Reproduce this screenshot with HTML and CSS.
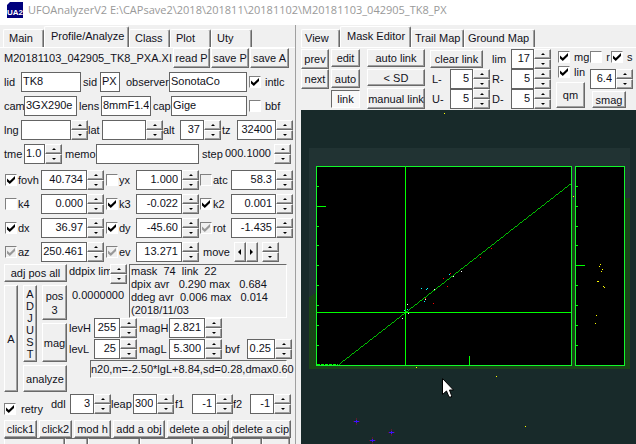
FILE: index.html
```html
<!DOCTYPE html>
<html lang="en">
<head>
  <meta charset="UTF-8">
  <meta name="viewport" content="width=device-width, initial-scale=1.0">
  <title>UFOAnalyzerV2</title>
  <link rel="stylesheet" href="styles.css">
</head>
<body>
  <header class="titlebar">
    <svg class="logo" width="16" height="16" viewBox="0 0 16 16">
      <path d="M0 3L3 0H16V16H0Z" fill="#00007c"/>
      <text x="8" y="13" text-anchor="middle" fill="#fff">UA2</text>
    </svg>
    <span>UFOAnalyzerV2 E:\CAPsave2\2018\201811\20181102\M20181103_042905_TK8_PX</span>
  </header>

  <main class="window">
    <section class="profile">
      <nav class="tabs">
        <button>Main</button>
        <button class="active">Profile/Analyze</button>
        <button>Class</button>
        <button>Plot</button>
        <button>Uty</button>
      </nav>
      <div class="panel">
        <div class="row file">
          <span class="name">M20181103_042905_TK8_PXA.XI</span>
          <button>read P</button>
          <button>save P</button>
          <button>save A</button>
        </div>

        <div class="row lid">
          <label for="lid">lid</label><input id="lid" value="TK8">
          <label for="sid">sid</label><input id="sid" value="PX">
          <label for="observer">observer</label><input id="observer" value="SonotaCo">
          <label class="check"><input type="checkbox" checked>intlc</label>
        </div>
        <div class="row cam">
          <label for="cam">cam</label><input id="cam" value="3GX290e">
          <label for="lens">lens</label><input id="lens" value="8mmF1.4">
          <label for="cap">cap</label><input id="cap" value="Gige">
          <label class="check"><input type="checkbox">bbf</label>
        </div>
        <div class="row lng">
          <label for="lng">lng</label><input id="lng"><span class="spin"></span>
          <label for="lat">lat</label><input id="lat"><span class="spin"></span>
          <label for="alt">alt</label><input id="alt" class="num" value="37"><span class="spin"></span>
          <label for="tz">tz</label><input id="tz" class="num" value="32400"><span class="spin"></span>
        </div>
        <div class="row tme">
          <label for="tme">tme</label><input id="tme" value="1.0"><span class="spin"></span>
          <label for="memo">memo</label><input id="memo">
          <label for="step">step</label><input id="step" class="flat" value="000.1000"><span class="spin"></span>
        </div>

        <div class="row coef first">
          <label class="check"><input type="checkbox" checked>fovh</label><input class="num" aria-label="fovh" value="40.734"><span class="spin"></span>
          <label class="check"><input type="checkbox">yx</label><input class="num" aria-label="yx" value="1.000"><span class="spin"></span>
          <label class="check"><input type="checkbox" disabled>atc</label><input class="num" aria-label="atc" value="58.3"><span class="spin"></span>
        </div>
        <div class="row coef">
          <label class="check"><input type="checkbox">k4</label><input class="num" aria-label="k4" value="0.000"><span class="spin"></span>
          <label class="check"><input type="checkbox" checked>k3</label><input class="num" aria-label="k3" value="-0.022"><span class="spin"></span>
          <label class="check"><input type="checkbox" checked>k2</label><input class="num" aria-label="k2" value="0.001"><span class="spin"></span>
        </div>
        <div class="row coef">
          <label class="check"><input type="checkbox" checked>dx</label><input class="num" aria-label="dx" value="36.97"><span class="spin"></span>
          <label class="check"><input type="checkbox" checked>dy</label><input class="num" aria-label="dy" value="-45.60"><span class="spin"></span>
          <label class="check"><input type="checkbox" checked disabled>rot</label><input class="num" aria-label="rot" value="-1.435"><span class="spin"></span>
        </div>
        <div class="row coef last">
          <label class="check"><input type="checkbox" checked disabled>az</label><input class="num" aria-label="az" value="250.461"><span class="spin"></span>
          <label class="check"><input type="checkbox" checked disabled>ev</label><input class="num" aria-label="ev" value="13.271"><span class="spin"></span>
          <div class="move">
            <span>move</span>
            <span class="pan"><button aria-label="left"></button><button aria-label="right"></button></span>
            <span class="spin"></span>
          </div>
        </div>

        <div class="adjust">
          <div class="tools">
            <button class="all">adj pos all</button>
            <button class="a">A</button>
            <button class="word">A<br>D<br>J<br>U<br>S<br>T</button>
            <button>pos<br>3</button>
            <button>mag</button>
            <button class="analyze">analyze</button>
          </div>
          <div class="results">
            <div class="stats">
              <div class="limit">
                <label for="ddpix">ddpix lim</label><span class="spin"></span>
                <input id="ddpix" class="flat" value="0.0000000">
              </div>
              <pre class="log">mask  74  link  22
dpix avr   0.290 max   0.684
ddeg avr  0.006 max   0.014
(2018/11/03</pre>
            </div>
            <div class="row lev">
              <label for="levh">levH</label><input id="levh" class="num" value="255"><span class="spin"></span>
              <label for="magh">magH</label><input id="magh" class="num" value="2.821"><span class="spin"></span>
            </div>
            <div class="row lev">
              <label for="levl">levL</label><input id="levl" class="num" value="25"><span class="spin"></span>
              <label for="magl">magL</label><input id="magl" class="num" value="5.300"><span class="spin"></span>
              <label for="bvf">bvf</label><input id="bvf" class="num" value="0.25"><span class="spin"></span>
            </div>
            <output class="fit">n20,m=-2.50*lgL+8.84,sd=0.28,dmax0.60</output>
          </div>
        </div>

        <div class="row ddl">
          <label class="check retry"><input type="checkbox" checked>retry</label>
          <label for="ddl">ddl</label><input id="ddl" class="num" value="3"><span class="spin"></span>
          <label for="leap">leap</label><input id="leap" class="num" value="300"><span class="spin"></span>
          <label for="f1">f1</label><input id="f1" class="num" value="-1"><span class="spin"></span>
          <label for="f2">f2</label><input id="f2" class="num" value="-1"><span class="spin"></span>
        </div>

        <div class="row objects">
          <button>click1</button>
          <button>click2</button>
          <button>mod h</button>
          <button>add a obj</button>
          <button>delete a obj</button>
          <button>delete a cip</button>
        </div>
        <div class="row columns">
          <button></button><button></button><button></button><button></button><button></button><button></button><button></button>
        </div>
      </div>
    </section>

    <section class="editor">
      <nav class="tabs">
        <button>View</button>
        <button class="active">Mask Editor</button>
        <button>Trail Map</button>
        <button>Ground Map</button>
      </nav>
      <div class="toolbar">
        <div class="stack step">
          <button>prev</button>
          <button>next</button>
        </div>
        <div class="stack mode">
          <button>edit</button>
          <button>auto</button>
          <button class="pressed">link</button>
        </div>
        <div class="stack link">
          <button>auto link</button>
          <button>&lt; SD</button>
          <button>manual link</button>
        </div>
        <div class="limits">
          <button class="clear">clear link</button>
          <label for="lim">lim</label><input id="lim" class="num" value="17"><span class="spin"></span>
          <label for="l">L-</label><input id="l" class="num" value="5"><span class="spin"></span>
          <label for="r">R-</label><input id="r" class="num" value="5"><span class="spin"></span>
          <label for="u">U-</label><input id="u" class="num" value="5"><span class="spin"></span>
          <label for="d">D-</label><input id="d" class="num" value="5"><span class="spin"></span>
        </div>
        <div class="options">
          <div class="marks">
            <label class="check"><input type="checkbox" checked>mg</label>
            <label class="check"><input type="checkbox">r</label>
            <label class="check"><input type="checkbox" checked>s</label>
          </div>
          <div class="quality">
            <div class="stack">
              <label class="check"><input type="checkbox" checked>lin</label>
              <button class="qm">qm</button>
            </div>
            <div class="stack">
              <div class="mag"><input class="num" aria-label="smag" value="6.4"><span class="spin"></span></div>
              <button class="smag">smag</button>
            </div>
          </div>
        </div>
      </div>

      <div class="sky">
        <svg viewBox="0 0 335 334" shape-rendering="crispEdges">
          <rect x="8" y="38" width="321" height="221" fill="#213333"/>
          <path d="M8 187L15 183L271 90L329 88V259H8Z" fill="#1a4517"/>
          <g fill="#000" stroke="#12f82a">
            <rect x="15.500" y="56.500" width="255" height="199"/>
            <rect x="274.500" y="56.500" width="49" height="199"/>
          </g>
          <g fill="none" stroke="#00ff00">
            <path d="M104.500 56V255M15 202.500H270M168.500 246V255"/>
            <path d="M16 76.500h2M16 96.500h9M16 116.500h2M16 135.500h2M16 155.500h2M16 175.500h2M16 195.500h2M16 215.500h2M16 235.500h2"/>
            <path d="M275 76.500h2M275 96.500h2M275 116.500h2M275 135.500h2M275 155.500h9M275 175.500h2M275 195.500h2M275 215.500h2M275 235.500h2"/>
            <path d="M16 254.500H37" stroke-dasharray="3 1"/>
            <path d="M38 254.500L269.500 74" stroke-width=".75"/>
          </g>
          <path stroke="#ffff00" d="M143 3.500h1M272 86.500h1M299 154.500h1M298 156.500h1M301 159.500h1M300 161.500h1M296 171.500h2M302 176.500h1M303 177.500h1M295 205.500h1M294 213.500h1M115 257.500h1M195 266.500h1M224 316.500h1"/>
          <path stroke="#ff0000" d="M190 138.500h1M179 147.500h1M142 168.500h1M146 176.500h1M149 163.500h1M132 193.500h1M124 188.500h1"/>
          <path stroke="#00ffff" d="M120 178.500h1M125 179.500h1M126 178.500h1M123 191.500h1M148 164.500h1M103 200.500h1M106 199.500h1"/>
          <path stroke="#ffffff" d="M160 161.500h1M152 166.500h1M133 179.500h1M124 189.500h1M106 194.500h1M107 203.500h1M101 208.500h1"/>
          <path stroke="#5c1c2c" d="M52 311.500h7M55.500 308v7M87 322.500h7M90.500 319v7M68 330.500h7M71.500 327v7"/>
          <path stroke="#3c10ff" d="M53 311.500h5M88 322.500h5M69 330.500h5M55.500 310v3M90.500 321v3M71.500 329v3"/>
          <path shape-rendering="auto" fill="#fff" stroke="#000" d="M141.500 268.500V284.500L145.500 281L148 287H150.500V285.500L148.500 280H152.500Z"/>
        </svg>
      </div>
    </section>
  </main>
  <script src="script.js"></script>
</body>
</html>
```

FILE: styles.css
```css
* {
  box-sizing: border-box;
}
body {
  margin: 0;
  height: 100vh;
  display: flex;
  flex-direction: column;
  overflow: hidden;
  background: #f0f0f0;
  color: #101020;
  font: 11px/14px "Liberation Sans", Arial, sans-serif;
}
.titlebar {
  display: flex;
  align-items: center;
  gap: 5px;
  height: 25px;
  flex: none;
  padding: 0 7px 6px;
  background: #fff;
  color: #999;
  font: 11px/18px "Open Sans", sans-serif;
  white-space: nowrap;
}
.logo {
  flex: none;
}
.logo text {
  font: bold 8px "Liberation Sans", sans-serif;
}
.window {
  flex: 1;
  min-height: 0;
  display: flex;
}
.profile {
  width: 296px;
  flex: none;
  border-right: 1px solid #a0a0a0;
}
.editor {
  flex: 1;
  min-width: 0;
  display: flex;
  flex-direction: column;
  margin-left: 5px;
}

/* controls */
button {
  padding: 0;
  border: 1px solid;
  border-color: #fff #696969 #696969 #fff;
  box-shadow: inset -1px -1px #a0a0a0;
  background: #f0f0f0;
  color: inherit;
  font: inherit;
  white-space: nowrap;
}
button.pressed {
  border-color: #696969 #fff #fff #696969;
  box-shadow: none;
  background: #f8f8f8;
}
input {
  min-width: 0;
  width: 100%;
  height: 20px;
  padding: 0 1px 2px;
  border: 1px solid #646464;
  border-radius: 0;
  background: #fff;
  color: inherit;
  font: inherit;
}
input.num {
  padding-right: 3px;
  text-align: right;
}
input.flat {
  border: 0;
  background: none;
}
.check {
  display: flex;
  align-items: center;
  gap: 1px;
}
input[type="checkbox"] {
  appearance: none;
  flex: none;
  position: relative;
  width: 12px;
  height: 12px;
  margin: 0;
  padding: 0;
  border-color: #808080 #fff #fff #808080;
}
input[type="checkbox"]:disabled {
  background: #f0f0f0;
}
input[type="checkbox"]:checked::after {
  content: "";
  position: absolute;
  left: 1px;
  top: 1px;
  width: 8px;
  height: 8px;
  background: #000;
  clip-path: polygon(0 30%, 35% 62%, 100% 0, 100% 38%, 35% 100%, 0 68%);
}
input[type="checkbox"]:disabled:checked::after {
  background: #999;
}
.spin {
  display: grid;
  grid-template-rows: 10px 10px;
  width: 17px;
  flex: none;
}
.spin button,
.pan button {
  display: grid;
  place-items: center;
}
.spin button::after {
  content: "";
  border: 2px solid transparent;
  border-top-width: 0;
  border-bottom-color: #000;
}
.spin button + button::after {
  border-width: 2px 2px 0;
  border-top-color: #000;
}

/* tabs */
.tabs {
  display: flex;
  align-items: flex-end;
  height: 22px;
  padding-left: 3px;
}
.tabs button {
  height: 18px;
  padding: 0 5px 1px;
  border-bottom: 0;
  border-radius: 2px 2px 0 0;
  box-shadow: inset -1px 0 #a0a0a0;
  text-align: left;
}
.tabs .active {
  height: 21px;
  padding: 0 6px 3px;
}
.profile .tabs button {
  width: 41px;
}
.profile .tabs .active {
  width: 85px;
}
.editor .tabs {
  padding-left: 0;
}
.editor .tabs button {
  width: 53px;
  padding: 0 3px 1px;
}
.editor .tabs button:first-child {
  width: 39px;
}
.editor .tabs .active,
.editor .tabs button:last-child {
  width: 71px;
}
.editor .tabs .active {
  padding: 0 6px 3px;
}

/* profile form */
.panel {
  display: flex;
  flex-direction: column;
  padding-left: 4px;
  border-top: 1px solid #fff;
}
.row {
  display: grid;
  align-items: center;
  height: 20px;
  margin-bottom: 4px;
  flex: none;
  white-space: nowrap;
}
.file {
  grid-template-columns: 168px 37px 38px 39px;
  column-gap: 1px;
}
.file button {
  height: 20px;
}
.lid {
  grid-template-columns: 17px 60px 19px 20px 49px 78px 1fr;
}
.cam {
  grid-template-columns: 20px 53px 24px 50px 20px 76px 1fr;
}
.lid label + input + label,
.cam label + input + label {
  padding-left: 2px;
}
.lid label:nth-of-type(3) {
  padding-left: 6px;
}
.lid .check,
.cam .check {
  gap: 4px;
}
.lng {
  grid-template-columns: 17px 50px 17px 14px 44px 17px 17px 24px 18px 15px 39px 17px;
}
.tme {
  grid-template-columns: 20px 21px 17px 34px 103px 25px 50px 17px;
}
.tme .spin + label,
.tme input + label {
  padding-left: 3px;
}
.first {
  margin-top: 2px;
}
.coef {
  grid-template-columns: 37px 46px 18px 31px 46px 17px 32px 45px 17px;
}
.last {
  margin-bottom: 2px;
}
.coef .check {
  padding-left: 1px;
}
.move {
  grid-column: 7 / -1;
  display: flex;
  align-items: center;
  gap: 4px;
  padding-left: 4px;
}
.pan {
  display: grid;
  grid-template-columns: 12px 12px;
  height: 20px;
}
.pan button::after {
  content: "";
  border: 3px solid transparent;
  border-left-width: 0;
  border-right-color: #000;
}
.pan button + button::after {
  border-width: 3px 0 3px 3px;
  border-left-color: #000;
}

/* adjust block */
.adjust {
  display: grid;
  grid-template-columns: 63px 1fr;
  column-gap: 2px;
}
.tools {
  display: grid;
  grid-template-columns: 14px 14px 25px;
  grid-template-rows: 18px 35px 39px 27px;
  gap: 3px 5px;
}
.tools .all {
  grid-column: 1 / -1;
}
.tools .a {
  grid-row: 2 / 5;
}
.tools .word {
  grid-row: 2 / 4;
  line-height: 12px;
}
.tools .analyze {
  grid-column: 2 / -1;
}
.stats {
  display: grid;
  grid-template-columns: 58px 158px;
  column-gap: 2px;
  height: 54px;
}
.limit {
  display: grid;
  grid-template-columns: 41px 17px;
  align-content: start;
  row-gap: 2px;
}
.limit label {
  white-space: nowrap;
}
.limit .flat {
  grid-column: 1 / -1;
  padding-left: 3px;
}
.log {
  margin: 0;
  padding: 0 1px;
  border: 1px solid;
  border-color: #696969 #fff #fff #696969;
  overflow: hidden;
  font: inherit;
  line-height: 13px;
}
.lev {
  grid-template-columns: 25px 26px 17px 32px 36px 18px 24px 28px 17px;
  margin-bottom: 1px;
}
.lev .spin + label {
  padding-left: 2px;
}
.fit {
  display: block;
  width: 197px;
  height: 18px;
  margin: 1px 0 0 21px;
  padding: 1px 0;
  border: 1px solid;
  border-color: #696969 #fff #fff #696969;
  white-space: nowrap;
}
.ddl {
  grid-template-columns: 47px 19px 24px 17px 22px 24px 18px 17px 24px 17px 17px 24px 17px;
  margin-bottom: 8px;
}
.ddl .retry {
  gap: 5px;
  padding-top: 10px;
}
.objects {
  grid-template-columns: 33px 33px 37px 52px 62px 60px;
  column-gap: 2px;
  height: 18px;
  margin-bottom: 0;
}
.objects button {
  height: 18px;
}
.columns {
  grid-template-columns: 61px 23px 52px 53px 40px 29px 28px;
}
.columns button {
  height: 20px;
  border-top-color: #696969;
}

/* mask editor */
.toolbar {
  display: flex;
  height: 63px;
  flex: none;
  padding-top: 1px;
  border-top: 1px solid #fff;
}
.stack {
  display: grid;
  align-content: start;
}
.step {
  grid-template: 20px 20px / 28px;
}
.mode {
  grid-template: 18px 19px 18px / 29px;
  row-gap: 2px;
  margin-left: 2px;
}
.link {
  grid-template: 18px 17px 21px / 58px;
  row-gap: 2px;
  margin-left: 7px;
}
.limits {
  display: grid;
  grid-template-columns: 20px 23px 17px 21px 23px 17px;
  grid-template-rows: 20px 20px 20px;
  align-items: center;
  margin-left: 5px;
}
.limits label {
  padding-left: 2px;
}
.limits .clear {
  grid-column: 1 / 4;
  width: 53px;
  height: 18px;
}
.options {
  flex: 1;
  min-width: 0;
  padding-left: 5px;
}
.marks {
  display: flex;
  align-items: center;
  gap: 1px;
  height: 16px;
  padding-left: 2px;
}
.marks .check,
.quality .check {
  gap: 4px;
}
.quality .check {
  padding-left: 2px;
}
.quality {
  display: grid;
  grid-template-columns: 29px 40px;
  column-gap: 5px;
}
.qm {
  height: 26px;
  margin-top: 3px;
}
.mag {
  display: grid;
  grid-template-columns: 26px 17px;
  margin-top: 4px;
}
.smag {
  width: 34px;
  height: 17px;
  margin: 2px 0 0 2px;
}
.sky {
  flex: 1;
  min-height: 0;
  overflow: hidden;
  background: #182a2a;
}
.sky svg {
  display: block;
  width: 100%;
}
```

FILE: script.js
```js
// every .spin gets an up and a down button for the field before it
document.querySelectorAll(".spin").forEach(spin => {
  [["up", 1], ["down", -1]].forEach(([name, dir]) => {
    const button = document.createElement("button");
    button.type = "button";
    button.setAttribute("aria-label", name);
    button.addEventListener("click", () => {
      const field = spin.previousElementSibling;
      if (!field || field.tagName !== "INPUT") return;
      const digits = (field.value.split(".")[1] || "").length;
      field.value = (Number(field.value) + dir / 10 ** digits).toFixed(digits);
    });
    spin.appendChild(button);
  });
});
```
